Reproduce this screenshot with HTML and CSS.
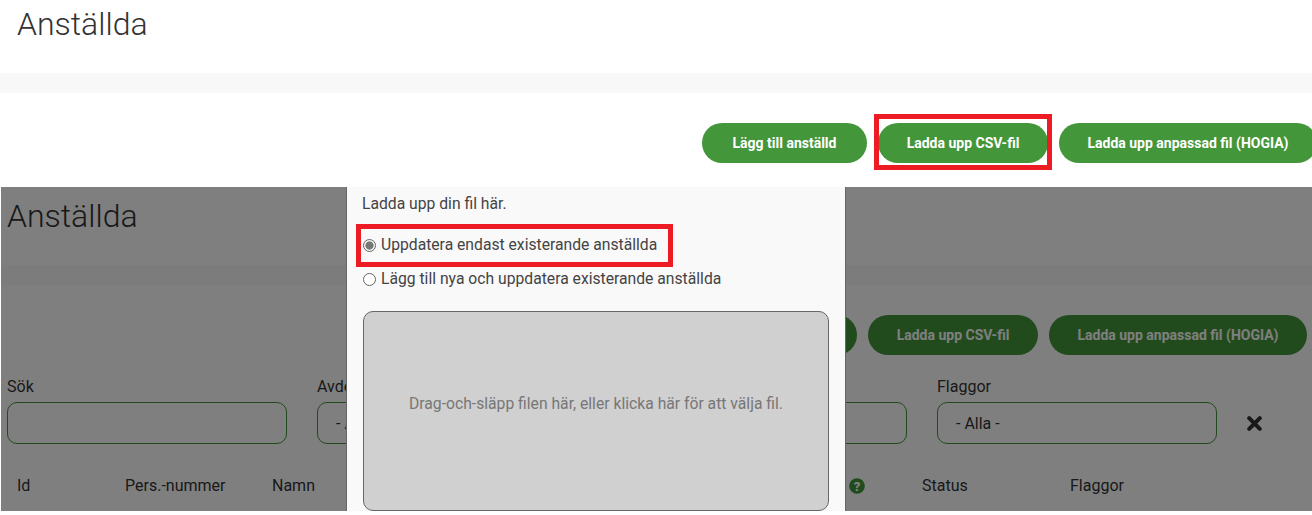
FILE: index.html
```html
<!DOCTYPE html>
<html lang="sv">
<head>
<meta charset="utf-8">
<title>Anställda</title>
<link rel="stylesheet" href="styles.css">
</head>
<body>
<section class="page">
  <h1 class="title">Anställda</h1>
  <div class="band"></div>
  <div class="actions">
    <a class="btn btn-add">Lägg till anställd</a>
    <a class="btn btn-csv">Ladda upp CSV-fil</a>
    <a class="btn btn-custom">Ladda upp anpassad fil (HOGIA)</a>
  </div>
  <div class="mark mark-csv"></div>
</section>
<section class="shot">
  <div class="page page-under">
    <h1 class="title">Anställda</h1>
    <div class="band"></div>
    <div class="actions">
      <a class="btn btn-add">Lägg till anställd</a>
      <a class="btn btn-csv">Ladda upp CSV-fil</a>
      <a class="btn btn-custom">Ladda upp anpassad fil (HOGIA)</a>
    </div>
    <div class="filters">
      <label class="field"><span class="field-label">Sök</span><span class="control"></span></label>
      <label class="field"><span class="field-label">Avdelning</span><span class="control">- Alla -</span></label>
      <label class="field field-hidden"><span class="control"></span></label>
      <label class="field"><span class="field-label">Flaggor</span><span class="control">- Alla -</span></label>
      <svg class="clear" viewBox="0 0 15 15" aria-hidden="true"><path d="M2.2 2.2l10.6 10.6M12.8 2.2L2.2 12.8"/></svg>
    </div>
    <div class="thead">
      <span class="th th-id">Id</span>
      <span class="th th-pers">Pers.-nummer</span>
      <span class="th th-name">Namn</span>
      <span class="th th-help"><svg class="help" viewBox="0 0 16 16" aria-hidden="true"><circle cx="8" cy="8" r="7.8"/><text x="8" y="12.6" text-anchor="middle">?</text></svg></span>
      <span class="th th-status">Status</span>
      <span class="th">Flaggor</span>
    </div>
  </div>
  <div class="backdrop"></div>
  <div class="modal">
    <p class="intro">Ladda upp din fil här.</p>
    <label class="choice"><span class="radio radio-on"></span>Uppdatera endast existerande anställda</label>
    <label class="choice"><span class="radio"></span>Lägg till nya och uppdatera existerande anställda</label>
    <div class="drop">Drag-och-släpp filen här, eller klicka här för att välja fil.</div>
  </div>
  <div class="mark mark-radio"></div>
</section>
</body>
</html>
```
FILE: styles.css
```css
* { box-sizing: border-box; }
html, body { margin: 0; padding: 0; background: #fff; }
body {
  width: 1312px;
  height: 515px;
  overflow: hidden;
  font-family: "Roboto", "Liberation Sans", sans-serif;
  color: #333;
}
.page { position: relative; height: 187px; padding-left: 17px; }
.title {
  margin: 0;
  height: 73px;
  padding-top: 6px;
  font-size: 32px;
  line-height: 36px;
  font-weight: 300;
  color: #333;
}
.band { height: 20px; margin-left: -17px; background: #f8f8f8; width: 1330px; }
.actions {
  display: flex;
  justify-content: flex-end;
  gap: 11px;
  padding-top: 30px;
  margin-right: -5px;
}
.btn {
  display: flex;
  align-items: center;
  justify-content: center;
  height: 40px;
  border-radius: 20px;
  background: #439639;
  color: #fff;
  font-size: 14px;
  font-weight: 700;
}
.btn-add { width: 165px; }
.btn-csv { width: 170px; }
.btn-custom { width: 258px; }
.mark { position: absolute; border: 5px solid #ed1c24; z-index: 5; }
.mark-csv { left: 874px; top: 114px; width: 178px; height: 56px; }
.mark-radio { left: 355px; top: 37px; width: 317px; height: 43px; }
.shot {
  position: relative;
  width: 1311px;
  height: 324px;
  margin-left: 1px;
  overflow: hidden;
}
.page-under { height: 324px; padding: 5px 0 0 6px; }
.page-under .band { margin-left: -7px; }
.page-under .actions { margin-right: 5px; }
.filters { display: flex; align-items: flex-start; padding-top: 21px; gap: 30px; }
.field { display: flex; flex-direction: column; width: 280px; }
.field-hidden { padding-top: 26px; }
.field-label { font-size: 16px; line-height: 20px; height: 26px; padding-top: 1px; color: #333; }
.control {
  display: flex;
  align-items: center;
  height: 42px;
  padding-left: 18px;
  border: 1px solid #439639;
  border-radius: 10px;
  font-size: 16px;
  color: #333;
}
.clear {
  width: 15px;
  height: 15px;
  margin: 40px 0 0 0;
  flex: none;
  fill: none;
  stroke: #333;
  stroke-width: 4px;
  stroke-linecap: round;
}
.thead { display: flex; align-items: center; padding: 32px 0 0 10px; font-size: 16px; }
.th { line-height: 20px; }
.th-id { width: 108px; }
.th-pers { width: 147px; }
.th-name { width: 577px; }
.th-help { width: 73px; display: flex; }
.th-status { width: 148px; }
.help { width: 16px; height: 16px; fill: #439639; }
.help text { fill: #fff; font-size: 13px; font-weight: 900; font-family: "Roboto", sans-serif; }
.backdrop { position: absolute; inset: 0; background: rgba(0, 0, 0, 0.5); }
.modal {
  position: absolute;
  left: 346px;
  top: 0;
  width: 498px;
  height: 328px;
  padding: 7px 16px 0;
  background: #f9f9f9;
  color: #444;
  font-size: 15.7px;
  box-shadow: 0 0 0 1px #666;
}
.intro { margin: 0 0 0 -1px; line-height: 20px; height: 34px; }
.choice { display: flex; align-items: center; gap: 5px; line-height: 20px; height: 34px; }
.radio {
  width: 13px;
  height: 13px;
  border: 1px solid #666;
  border-radius: 50%;
  background: #fff;
  flex: none;
}
.radio-on { background: radial-gradient(circle, #777 0 3.8px, #f4f4f4 4.4px); }
.drop {
  display: flex;
  align-items: center;
  justify-content: center;
  height: 200px;
  margin-top: 15px;
  padding-bottom: 15px;
  border: 1px solid #666;
  border-radius: 10px;
  background: #d0d0d0;
  color: #777;
}
```
